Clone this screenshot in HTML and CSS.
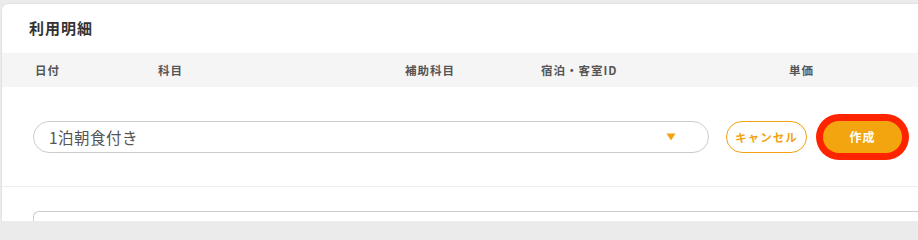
FILE: index.html
```html
<!DOCTYPE html>
<html lang="ja">
<head>
<meta charset="utf-8">
<link rel="stylesheet" href="styles.css">
</head>
<body>
<div class="card">
  <div class="title">利用明細</div>
  <div class="thead">
    <span>日付</span>
    <span>科目</span>
    <span>補助科目</span>
    <span>宿泊・客室ID</span>
    <span>単価</span>
  </div>
  <div class="row">
    <div class="select">
      <span class="select-text">1泊朝食付き</span>
      <svg class="arrow" width="10" height="8" viewBox="0 0 10 8"><polygon points="0.5,0.5 9.5,0.5 5,7.5" fill="#f2a30f"/></svg>
    </div>
    <button class="btn-cancel">キャンセル</button>
    <button class="btn-create">作成</button>
  </div>
  <div class="row2">
    <div class="input"></div>
  </div>
</div>
</body>
</html>
```
FILE: styles.css
```css
html, body {
  margin: 0;
  padding: 0;
}
body {
  background: #ebebeb;
  font-family: "Noto Sans CJK JP", "Noto Sans", sans-serif;
  padding: 4px 0 0 2px;
}
.card {
  background: #fff;
  border-radius: 6px 0 0 0;
  box-shadow: 0 0 2px rgba(0,0,0,0.12);
  height: 217px;
  overflow: hidden;
}
.title {
  height: 49px;
  box-sizing: border-box;
  padding: 12px 0 0 27px;
  font-size: 15px;
  line-height: 24px;
  font-weight: 700;
  color: #333;
  letter-spacing: 1px;
}
.thead {
  height: 34px;
  background: #f5f5f5;
  display: grid;
  grid-template-columns: 123px 247px 136px 248px 1fr;
  padding-left: 33px;
  align-items: center;
  font-size: 11.5px;
  font-weight: 700;
  color: #555;
  letter-spacing: 1px;
}
.row {
  height: 100px;
  box-sizing: border-box;
  border-bottom: 1px solid #eeeeee;
  display: flex;
  align-items: center;
  padding-left: 31px;
}
.select {
  width: 676px;
  height: 32px;
  box-sizing: border-box;
  border: 1px solid #cccccc;
  border-radius: 16px;
  display: flex;
  align-items: center;
  justify-content: space-between;
  padding: 0 32px 0 15px;
}
.select-text {
  font-size: 15.5px;
  color: #555;
  letter-spacing: 0.5px;
}
.arrow {
  display: block;
}
.btn-cancel {
  margin-left: 17px;
  width: 81px;
  height: 32px;
  border: 1px solid #f2a30f;
  background: #fff;
  border-radius: 16px;
  color: #f2a30f;
  font-family: inherit;
  font-size: 11.5px;
  font-weight: 700;
  letter-spacing: 1px;
  padding: 0;
}
.btn-create {
  margin-left: 16px;
  width: 79px;
  height: 32px;
  border: none;
  background: #f2a50f;
  border-radius: 16px;
  color: #fff;
  font-family: inherit;
  font-size: 12px;
  font-weight: 700;
  letter-spacing: 1px;
  padding: 0;
  box-shadow: 0 0 0 7px #ff2400;
}
.row2 {
  padding: 24px 0 0 31px;
}
.input {
  height: 40px;
  border: 1px solid #cccccc;
  border-radius: 6px 0 0 0;
  border-right: none;
}
```
